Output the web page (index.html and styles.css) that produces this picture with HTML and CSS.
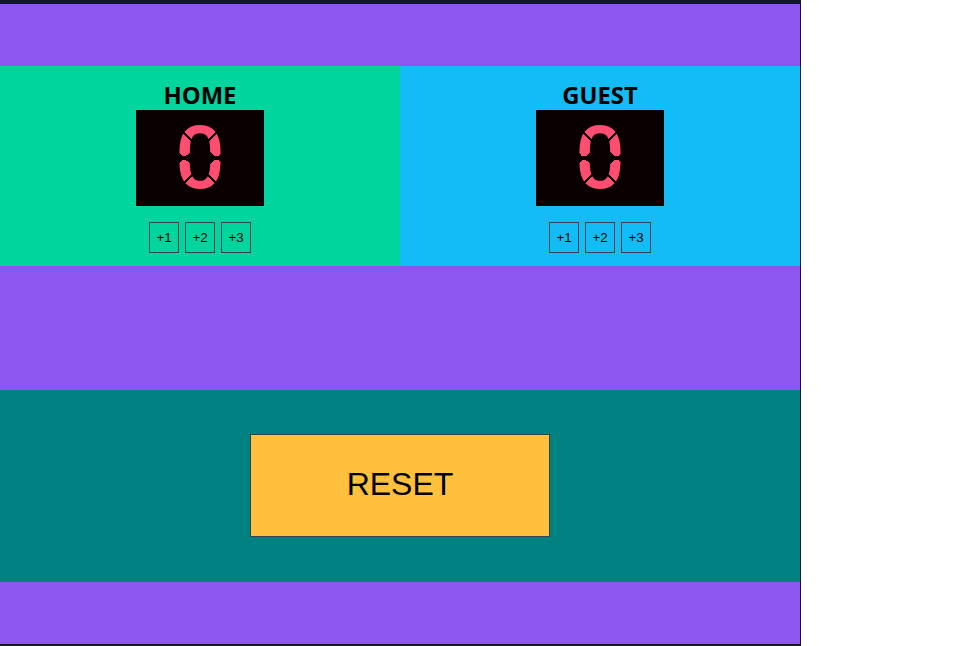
FILE: index.html
```html
<!DOCTYPE html>
<html lang="en">
<head>
<meta charset="utf-8">
<title>Scoreboard</title>
<link rel="stylesheet" href="styles.css">
</head>
<body>
<main class="board">
  <section class="teams">
    <div class="team home">
      <h2>HOME</h2>
      <div class="display"><span class="digit">0</span></div>
      <div class="points"><button>+1</button><button>+2</button><button>+3</button></div>
    </div>
    <div class="team guest">
      <h2>GUEST</h2>
      <div class="display"><span class="digit">0</span></div>
      <div class="points"><button>+1</button><button>+2</button><button>+3</button></div>
    </div>
  </section>
  <section class="controls"><button class="reset">RESET</button></section>
</main>
</body>
</html>
```
FILE: styles.css
```css
* { box-sizing: border-box; }
body { margin: 0; background: #fff; overflow: hidden; }
.board {
  width: 801px;
  height: 646px;
  border: solid #111827;
  border-width: 4px 1px 2px 0;
  background: #8d57ef;
  display: flex;
  flex-direction: column;
  justify-content: space-around;
}
.teams { display: grid; grid-template-columns: 1fr 1fr; height: 200px; }
.team { display: flex; flex-direction: column; align-items: center; padding-top: 14px; }
.home { background: #00d59e; }
.guest { background: #14bcf5; }
h2 {
  margin: 0;
  font: bold 23.8px/30px "Open Sans", "Noto Sans", sans-serif;
  color: #000;
}
.display {
  width: 128px;
  height: 96px;
  background: #0a0001;
  display: flex;
  align-items: center;
  justify-content: center;
}
.digit {
  position: relative;
  width: 44px;
  height: 64px;
  display: flex;
  align-items: center;
  justify-content: center;
  font: 500 88px/64px Roboto, sans-serif;
  color: #ff4e70;
}
/* Gaps between the lit segments */
.digit::before, .digit::after {
  content: "";
  position: absolute;
  inset: 0;
}
.digit::before {
  background:
    linear-gradient(45deg, transparent 45%, #0a0001 45% 55%, transparent 55%) 2px 3px / 16px 16px no-repeat,
    linear-gradient(45deg, transparent 45%, #0a0001 45% 55%, transparent 55%) 26px 45px / 16px 16px no-repeat,
    conic-gradient(from 45deg, #0a0001 90deg, transparent 90deg 180deg, #0a0001 180deg 270deg, transparent 270deg) 0 25px / 12px 14px no-repeat,
    conic-gradient(from 45deg, #0a0001 90deg, transparent 90deg 180deg, #0a0001 180deg 270deg, transparent 270deg) 32px 25px / 12px 14px no-repeat;
}
.digit::after {
  background:
    linear-gradient(#0a0001, #0a0001) center 30px / 100% 4px no-repeat,
    linear-gradient(-45deg, transparent 45%, #0a0001 45% 55%, transparent 55%) 26px 3px / 16px 16px no-repeat,
    linear-gradient(-45deg, transparent 45%, #0a0001 45% 55%, transparent 55%) 2px 45px / 16px 16px no-repeat;
}
.points { display: flex; gap: 6px; margin-top: 16px; }
button {
  padding: 0;
  border: 1px solid #374151;
  background: transparent;
  color: #000;
  font: 13.333px "Liberation Sans", Arial, sans-serif;
}
.points button { width: 30px; height: 31px; }
.controls {
  height: 192px;
  padding-bottom: 1px;
  background: #008080;
  display: flex;
  align-items: center;
  justify-content: center;
}
.reset {
  width: 300px;
  height: 103px;
  padding-bottom: 3px;
  background: #ffc03e;
  font-size: 32px;
  line-height: 36px;
}
```
